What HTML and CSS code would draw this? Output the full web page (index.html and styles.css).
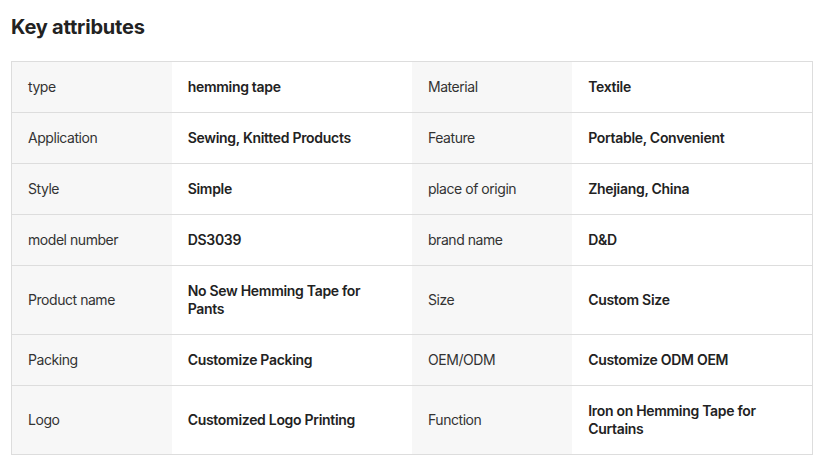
FILE: index.html
```html
<!DOCTYPE html>
<html>
<head>
<meta charset="utf-8">
<link rel="stylesheet" href="styles.css">
</head>
<body>
<div class="page">
  <h2 class="title">Key attributes</h2>
  <table class="attrs">
    <tr><td class="k">type</td><td class="v">hemming tape</td><td class="k">Material</td><td class="v">Textile</td></tr>
    <tr><td class="k">Application</td><td class="v">Sewing, Knitted Products</td><td class="k">Feature</td><td class="v">Portable, Convenient</td></tr>
    <tr><td class="k">Style</td><td class="v">Simple</td><td class="k">place of origin</td><td class="v">Zhejiang, China</td></tr>
    <tr><td class="k">model number</td><td class="v">DS3039</td><td class="k">brand name</td><td class="v">D&amp;D</td></tr>
    <tr><td class="k">Product name</td><td class="v">No Sew Hemming Tape for Pants</td><td class="k">Size</td><td class="v">Custom Size</td></tr>
    <tr><td class="k">Packing</td><td class="v">Customize Packing</td><td class="k">OEM/ODM</td><td class="v">Customize ODM OEM</td></tr>
    <tr><td class="k">Logo</td><td class="v">Customized Logo Printing</td><td class="k">Function</td><td class="v">Iron on Hemming Tape for Curtains</td></tr>
  </table>
</div>
</body>
</html>
```
FILE: styles.css
```css
* { box-sizing: border-box; }
body {
  margin: 0;
  background: #fff;
  font-family: Inter, "Noto Sans", sans-serif;
  color: #222;
}
.page {
  padding: 14px 11px 0 11px;
}
.title {
  margin: 0 0 21px 0;
  font-size: 20px;
  line-height: 26px;
  font-weight: 700;
  color: #222;
  letter-spacing: -0.2px;
}
.attrs {
  border-collapse: collapse;
  width: 802px;
  border: 1px solid #ddd;
  table-layout: fixed;
}
.attrs tr {
  border-bottom: 1px solid #ddd;
}
.attrs td {
  padding: 16px 16px;
  font-size: 14px;
  line-height: 18px;
  vertical-align: middle;
}
.attrs td.k {
  width: 160px;
  background: #f7f7f7;
  color: #333;
  font-weight: 400;
  letter-spacing: -0.45px;
}
.attrs td.v {
  width: 240px;
  background: #fff;
  color: #222;
  font-weight: 600;
  letter-spacing: -0.3px;
}
```
